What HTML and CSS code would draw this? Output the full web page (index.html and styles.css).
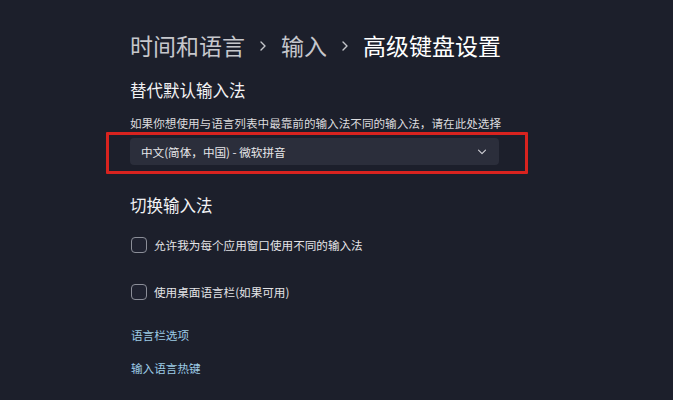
FILE: index.html
```html
<!DOCTYPE html>
<html lang="zh-CN">
<head>
<meta charset="utf-8">
<link rel="stylesheet" href="styles.css">
</head>
<body>
<main class="page">
  <h1 class="crumbs">
    <span class="crumb">时间和语言</span>
    <svg class="sep" width="8" height="12" viewBox="0 0 8 12"><path d="M2 2 L6 6 L2 10" fill="none" stroke="#c4c5ca" stroke-width="1.4" stroke-linecap="round" stroke-linejoin="round"/></svg>
    <span class="crumb">输入</span>
    <svg class="sep" width="8" height="12" viewBox="0 0 8 12"><path d="M2 2 L6 6 L2 10" fill="none" stroke="#c4c5ca" stroke-width="1.4" stroke-linecap="round" stroke-linejoin="round"/></svg>
    <span class="crumb current">高级键盘设置</span>
  </h1>

  <h2 class="section first">替代默认输入法</h2>
  <p class="desc">如果你想使用与语言列表中最靠前的输入法不同的输入法，请在此处选择</p>
  <div class="select-wrap">
    <div class="select">
      <span>中文(简体，中国) - 微软拼音</span>
      <svg class="chev" width="10" height="6" viewBox="0 0 10 6"><path d="M1.5 1.2 L5 4.6 L8.5 1.2" fill="none" stroke="#d0d1d6" stroke-width="1.1" stroke-linecap="round" stroke-linejoin="round"/></svg>
    </div>
    <div class="highlight"></div>
  </div>

  <h2 class="section second">切换输入法</h2>
  <label class="check first-check"><span class="box"></span><span>允许我为每个应用窗口使用不同的输入法</span></label>
  <label class="check second-check"><span class="box"></span><span>使用桌面语言栏(如果可用)</span></label>

  <a class="link first-link">语言栏选项</a>
  <a class="link second-link">输入语言热键</a>
</main>
</body>
</html>
```

FILE: styles.css
```css
html, body {
  margin: 0;
  padding: 0;
  background: #1c1f2b;
  height: 100%;
  overflow: hidden;
}
body {
  font-family: "Noto Sans CJK SC", "Noto Sans", sans-serif;
  color: #e6e6e8;
}
.page {
  padding: 30px 0 0 130px;
  display: flex;
  flex-direction: column;
  align-items: flex-start;
}
.crumbs {
  margin: 0;
  font-size: 23px;
  font-weight: 400;
  line-height: 30px;
  height: 30px;
  display: flex;
  align-items: center;
  white-space: nowrap;
}
.crumb {
  color: #c6c7cc;
}
.crumb.current {
  color: #ffffff;
}
.sep {
  margin: 2px 14px 0 14px;
}
.section {
  margin: 0;
  font-size: 16.5px;
  font-weight: 400;
  line-height: 24px;
  color: #f2f2f4;
}
.section.first { margin-top: 18px; }
.section.second { margin-top: 28px; }
.desc {
  margin: 12px 0 0;
  font-size: 11.6px;
  line-height: 18px;
  color: #dcdcdf;
  white-space: nowrap;
}
.select-wrap {
  position: relative;
  margin-top: 6px;
}
.select {
  width: 369px;
  height: 27px;
  box-sizing: border-box;
  background: #2b2e3b;
  border-radius: 4px;
  display: flex;
  align-items: center;
  justify-content: space-between;
  padding: 0 12px 0 11px;
  font-size: 11.6px;
  color: #e8e8ea;
}
.chev {
  margin-top: 1px;
}
.highlight {
  position: absolute;
  left: -24px;
  top: -6px;
  width: 422px;
  height: 42px;
  box-sizing: border-box;
  border: 3px solid #d8231f;
  border-radius: 1px;
  pointer-events: none;
}
.check {
  display: flex;
  align-items: center;
  height: 24px;
  font-size: 11.6px;
  color: #e4e4e7;
  white-space: nowrap;
}
.check.first-check { margin-top: 16px; }
.check.second-check { margin-top: 23px; }
.box {
  width: 16px;
  height: 16px;
  box-sizing: border-box;
  border: 1.5px solid #8b8e98;
  border-radius: 4px;
  margin: 0 7px 0 1px;
  background: #1f2230;
}
.link {
  display: block;
  font-size: 11.6px;
  line-height: 18px;
  color: #9dcbe6;
  margin-left: 1px;
}
.link.first-link { margin-top: 22px; }
.link.second-link { margin-top: 15px; }
```
